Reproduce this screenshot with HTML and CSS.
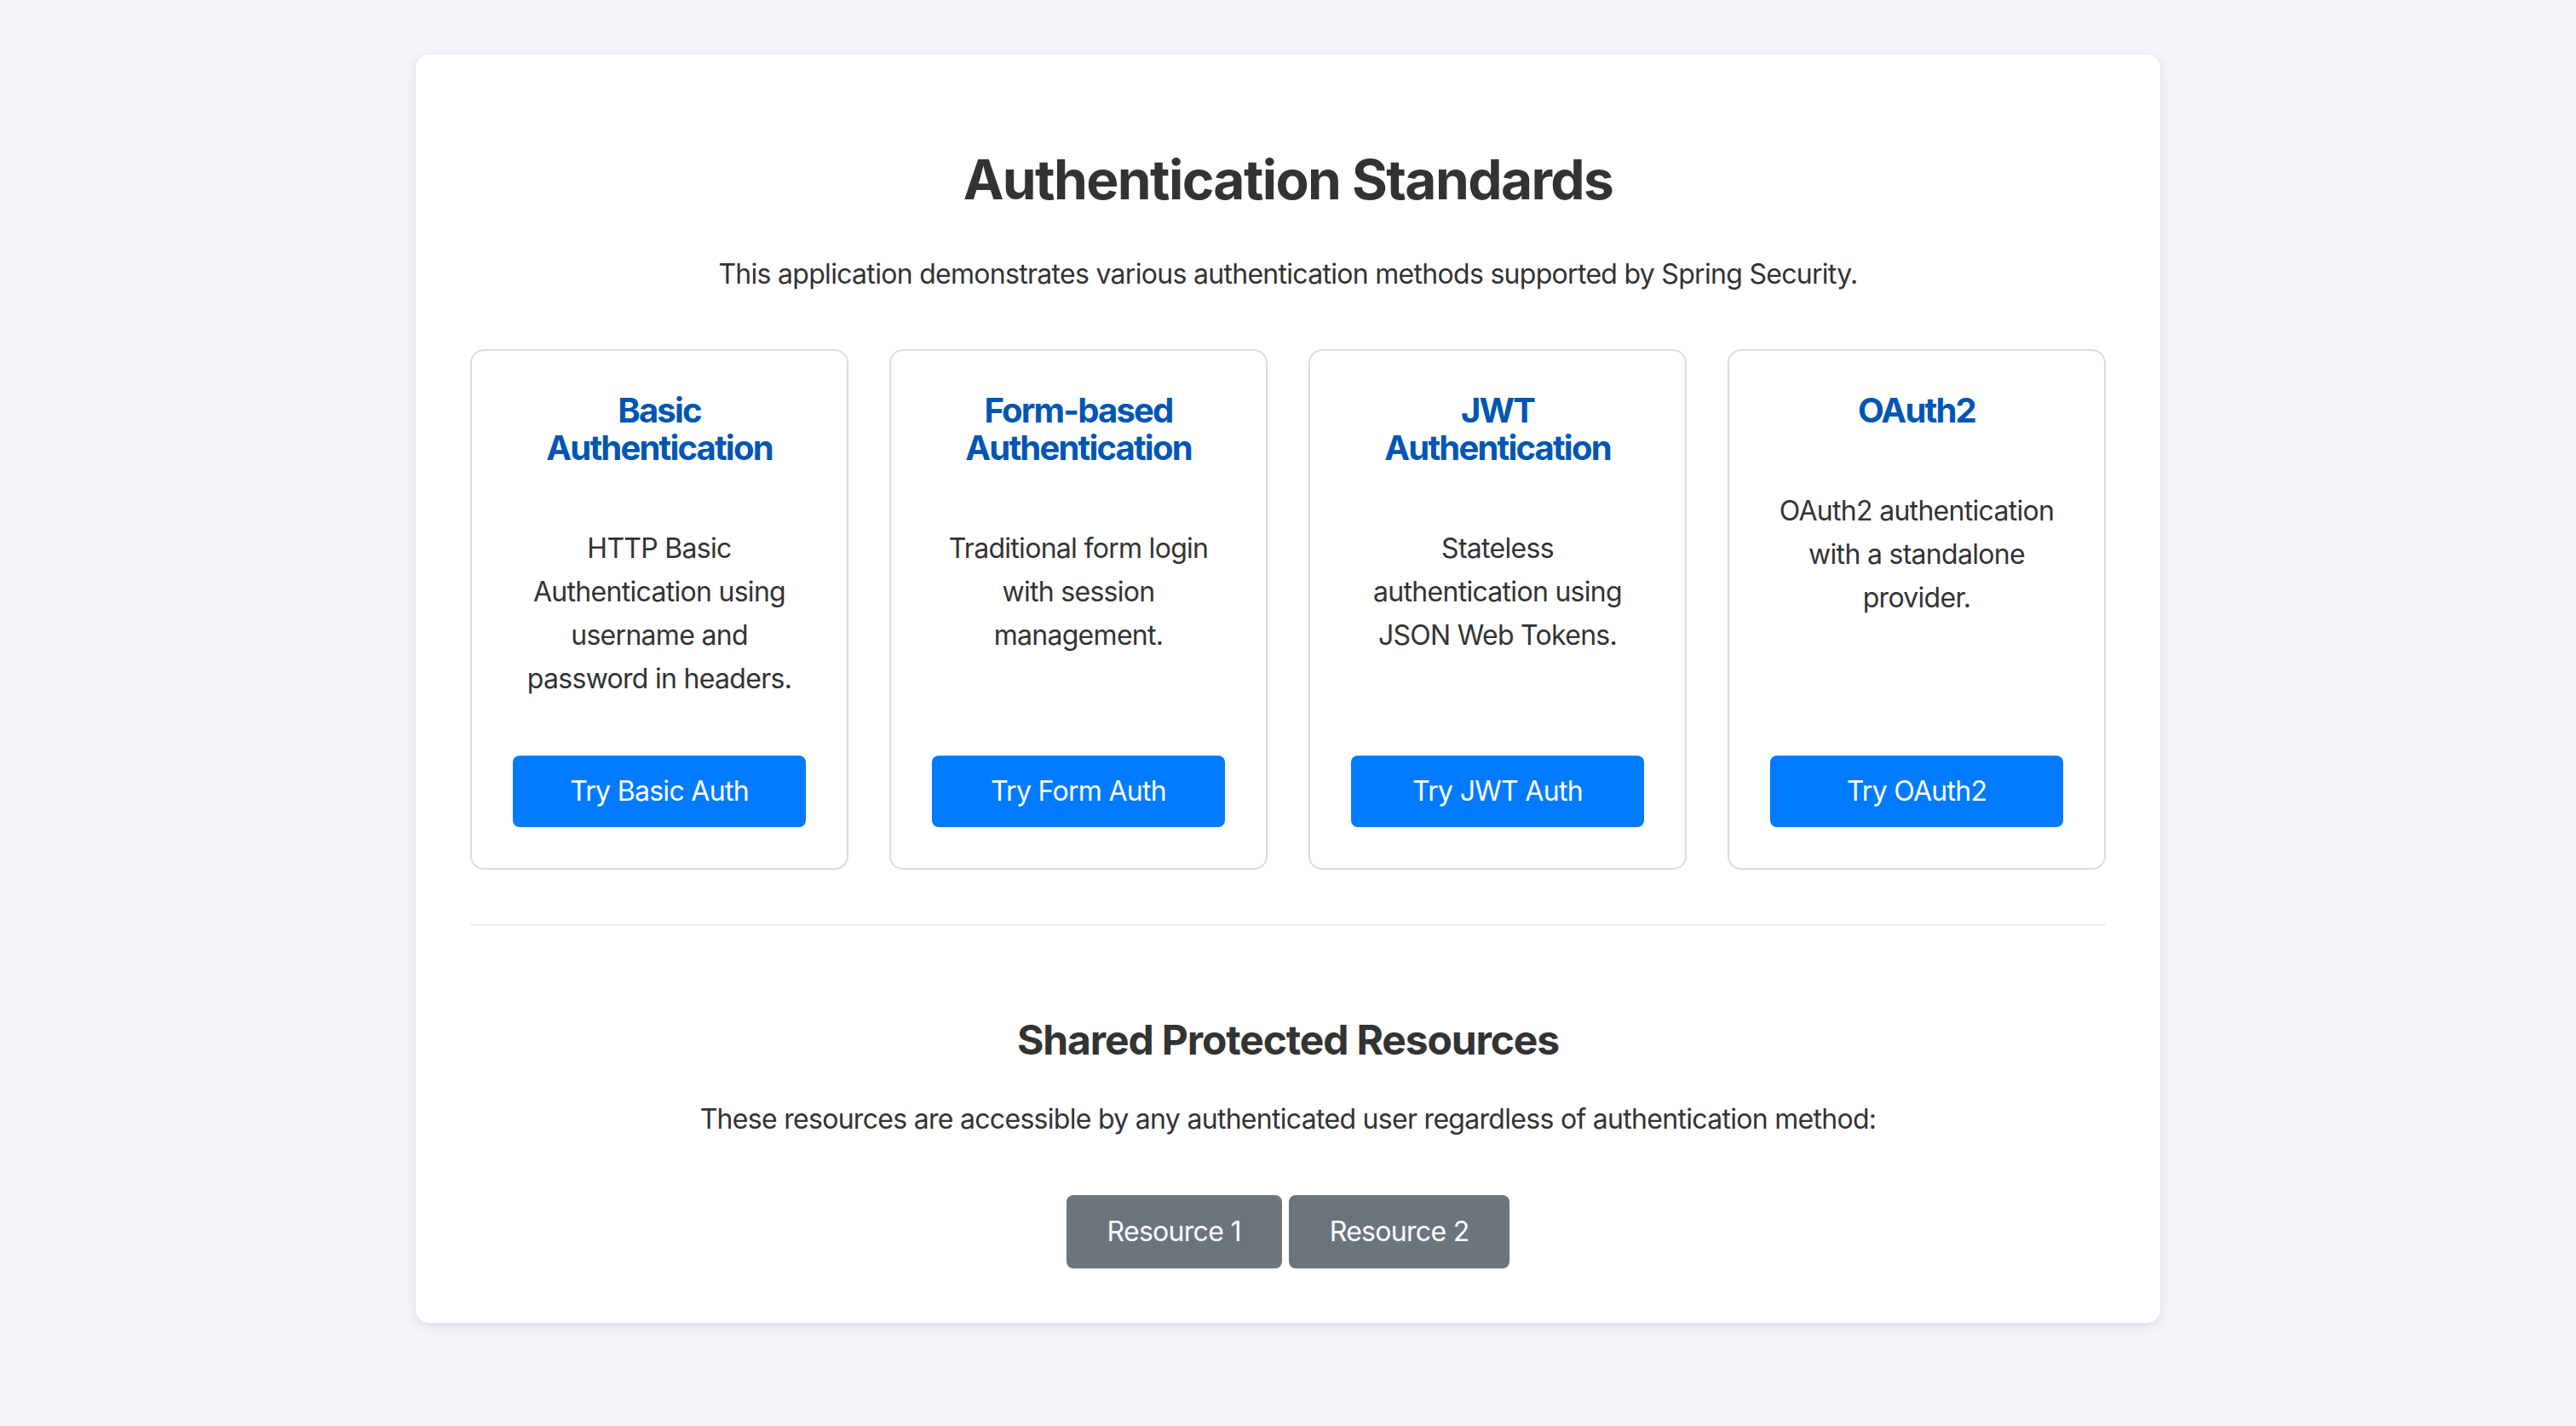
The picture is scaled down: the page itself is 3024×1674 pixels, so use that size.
FILE: index.html
```html
<!DOCTYPE html>
<html lang="en">
<head>
<meta charset="utf-8">
<title>Authentication Standards</title>
<link rel="stylesheet" href="styles.css">
</head>
<body>
<main class="container">
  <h1 class="page-title">Authentication Standards</h1>
  <p class="intro">This application demonstrates various authentication methods supported by Spring Security.</p>

  <section class="auth-grid">
    <div class="auth-card">
      <h3 class="card-title">Basic Authentication</h3>
      <p class="card-text">HTTP Basic Authentication using username and password in headers.</p>
      <a class="btn btn-primary" href="#">Try Basic Auth</a>
    </div>
    <div class="auth-card">
      <h3 class="card-title">Form-based Authentication</h3>
      <p class="card-text">Traditional form login with session management.</p>
      <a class="btn btn-primary" href="#">Try Form Auth</a>
    </div>
    <div class="auth-card">
      <h3 class="card-title">JWT Authentication</h3>
      <p class="card-text">Stateless authentication using JSON Web Tokens.</p>
      <a class="btn btn-primary" href="#">Try JWT Auth</a>
    </div>
    <div class="auth-card">
      <h3 class="card-title">OAuth2</h3>
      <p class="card-text">OAuth2 authentication with a standalone provider.</p>
      <a class="btn btn-primary" href="#">Try OAuth2</a>
    </div>
  </section>

  <hr class="divider">

  <section class="shared">
    <h2 class="shared-title">Shared Protected Resources</h2>
    <p class="shared-text">These resources are accessible by any authenticated user regardless of authentication method:</p>
    <div class="resource-links">
      <a class="btn btn-secondary" href="#">Resource 1</a>
      <a class="btn btn-secondary" href="#">Resource 2</a>
    </div>
  </section>
</main>
</body>
</html>
```

FILE: styles.css
```css
* { box-sizing: border-box; }

html, body {
  margin: 0;
  padding: 0;
}

body {
  background: #f4f4f9;
  font-family: "Inter", "Noto Sans", "Liberation Sans", sans-serif;
  color: #333;
  font-size: 32px;
  line-height: 51px;
  letter-spacing: -0.022em;
  padding: 64px 0 120px;
}

.container {
  width: 2048px;
  margin: 0 auto;
  background: #fff;
  border-radius: 16px;
  box-shadow: 0 4px 16px rgba(0, 0, 0, 0.1);
  padding: 64px 64px 64px;
  text-align: center;
}

.page-title {
  font-size: 64px;
  line-height: 78px;
  font-weight: 700;
  letter-spacing: -0.025em;
  margin: 44px 0 46px;
  color: #333;
}

.intro {
  margin: 0 0 63px;
}

.auth-grid {
  display: grid;
  grid-template-columns: repeat(4, 1fr);
  gap: 48px;
}

.auth-card {
  border: 2px solid #ddd;
  border-radius: 16px;
  padding: 48px;
  display: flex;
  flex-direction: column;
}

.card-title {
  font-size: 40px;
  line-height: 44px;
  font-weight: 700;
  letter-spacing: -0.045em;
  color: #0056b3;
  margin: 0 0 70px;
}

.card-text {
  margin: 0 0 65px;
}

.btn {
  display: inline-block;
  text-decoration: none;
  color: #fff;
  font-size: 32px;
  line-height: 36px;
  padding: 24px 44px;
  border-radius: 8px;
}

.auth-card .btn {
  display: block;
  margin-top: auto;
}

.btn-primary { background: #007bff; }
.btn-secondary {
  background: #6c757d;
  padding: 25px 48px;
}

.divider {
  border: 0;
  border-top: 2px solid #eee;
  margin: 64px 0 105px;
}

.shared-title {
  font-size: 48px;
  line-height: 58px;
  font-weight: 700;
  letter-spacing: -0.024em;
  margin: 0 0 38px;
}

.shared-text {
  margin: 0 0 64px;
}

.resource-links {
  display: flex;
  justify-content: center;
  gap: 8px;
}
```
